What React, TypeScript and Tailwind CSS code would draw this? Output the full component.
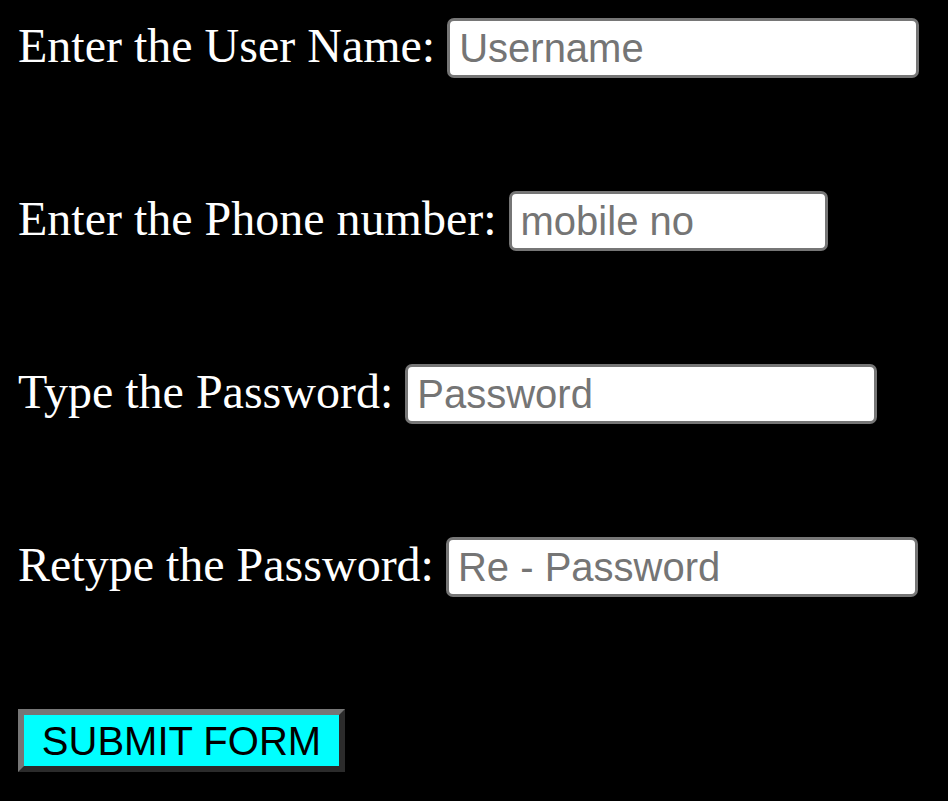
const rows = [
  { label: "Enter the User Name:", placeholder: "Username", width: "w-[472px]" },
  { label: "Enter the Phone number:", placeholder: "mobile no", width: "w-[319px]" },
  { label: "Type the Password:", placeholder: "Password", width: "w-[472px]" },
  { label: "Retype the Password:", placeholder: "Re - Password", width: "w-[472px]" },
];

export default function App() {
  return (
    <div className="min-h-[801px] w-full bg-black pl-[18px] pt-[18px] text-white">
      <form className="flex flex-col gap-[113px]" onSubmit={(e) => e.preventDefault()}>
        {rows.map((row) => (
          <div key={row.label} className="flex items-baseline">
            <label className="whitespace-pre font-['Liberation_Serif',serif] text-[48px] leading-none">
              {row.label + " "}
            </label>
            <input
              type="text"
              placeholder={row.placeholder}
              className={`${row.width} h-[60px] rounded-[7px] border-[3px] border-[#767676] bg-white px-[9px] font-['Liberation_Sans',Arial,sans-serif] text-[40px] text-black outline-none placeholder:text-[#757575]`}
            />
          </div>
        ))}
        <div className="-mt-px">
          <button
            type="submit"
            className="flex h-[63px] w-[327px] items-center justify-center border-[6px] border-t-[#767676] border-l-[#767676] border-b-[#2b2b2b] border-r-[#2b2b2b] bg-[#00ffff] font-['Liberation_Sans',Arial,sans-serif] text-[40px] leading-none text-black"
          >
            SUBMIT FORM
          </button>
        </div>
      </form>
    </div>
  );
}
